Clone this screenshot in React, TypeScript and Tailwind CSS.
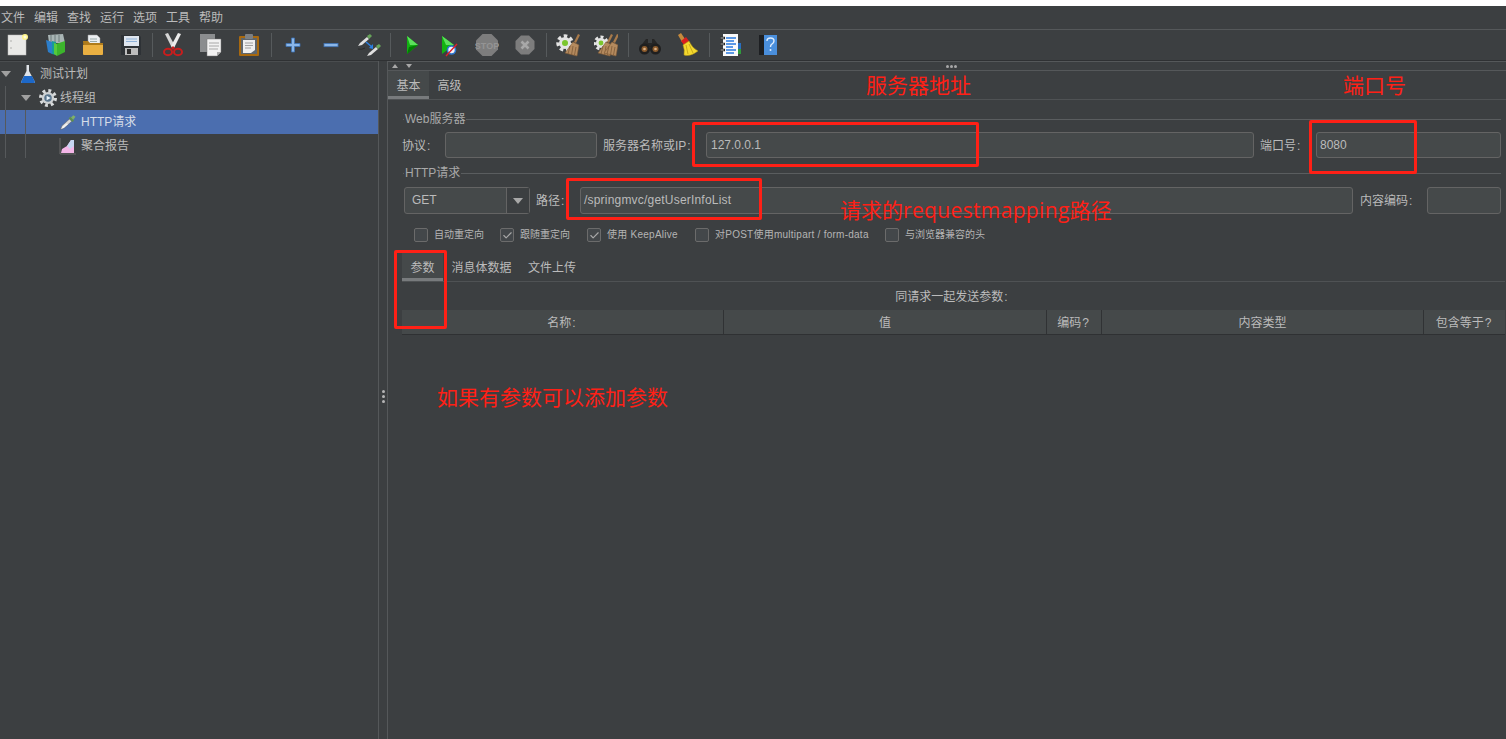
import React from "react";
import { Check } from "lucide-react";

const S = ({ children }: { children: React.ReactNode }) => (
  <svg width="24" height="24" viewBox="0 0 24 24" className="block shrink-0">{children}</svg>
);

const Pipette = () => (
  <g>
    <path d="M2 22 L4 17 L14 8 L17 11 L7 20 Z" fill="#d8d8d8" stroke="#555" strokeWidth="0.6" />
    <path d="M3 21 L5 18 L10 14 L12 15 L6 20 Z" fill="#f4f4f4" />
    <path d="M13 7 L18 12 L20 10 L15 5 Z" fill="#5d8f4e" />
    <path d="M16 6 L19 3 L22 5 L19 9 Z" fill="#7fb069" />
  </g>
);

const Broom = ({ x = 0, y = 0 }: { x?: number; y?: number }) => (
  <g transform={`translate(${x} ${y})`}>
    <path d="M21 1 L17 9 L15 8 L19 0 Z" fill="#a87a4a" />
    <path d="M14 8 L20 11 L18 22 L6 19 Z" fill="#b48a5e" stroke="#7d5a38" strokeWidth="0.6" />
    <path d="M11 12 L9 20 M14 12 L12.5 21 M17 13 L15.5 21" stroke="#7d5a38" strokeWidth="0.8" />
  </g>
);

const Gear = ({ cx, cy, r, fill = "#e4e4e4" }: { cx: number; cy: number; r: number; fill?: string }) => (
  <g>
    <circle cx={cx} cy={cy} r={r} fill="none" stroke={fill} strokeWidth={r * 0.5} strokeDasharray={`${r * 0.5} ${r * 0.4}`} />
    <circle cx={cx} cy={cy} r={r * 0.85} fill={fill} />
  </g>
);

const icons: Record<string, React.ReactNode> = {
  new: (
    <S>
      <rect x="3" y="2" width="18" height="20" fill="#e9e9e7" stroke="#bdbdbd" strokeWidth="0.5" />
      <circle cx="6" cy="8" r="0.7" fill="#999" />
      <circle cx="6" cy="15" r="0.7" fill="#999" />
      <circle cx="20" cy="4" r="3" fill="#fff48a" />
      <circle cx="20" cy="4" r="1.5" fill="#fffde0" />
    </S>
  ),
  templates: (
    <S>
      <path d="M5 2 L20 1 L22 10 L6 10 Z" fill="#a9b5b5" />
      <path d="M8 2 V9 M12 2 V9 M16 2 V9" stroke="#6f7c7c" />
      <path d="M3 7 L9 9 L9 21 L5 19 Z" fill="#2c7ecb" />
      <path d="M9 8 L13 9 L13 22 L9 21 Z" fill="#179a9a" />
      <path d="M13 11 L22 8 L22 19 L14 23 Z" fill="#3cb52c" />
      <path d="M14 11 L14 23 L11 21 L11 10 Z" fill="#56c93c" />
    </S>
  ),
  open: (
    <S>
      <path d="M7 2 H16 L19 5 V14 H7 Z" fill="#eceff2" stroke="#9a9a9a" strokeWidth="0.5" />
      <path d="M9 6 H16 M9 8.5 H16" stroke="#9aa" />
      <path d="M2 8 H7 L9 10 H22 V21 H3 Z" fill="#b07c1c" />
      <path d="M2 12 H22 L22 21 Q22 22 21 22 H3 Q2 22 2 21 Z" fill="#eab042" />
    </S>
  ),
  save: (
    <S>
      <path d="M2 2 H20 L22 4 V22 H2 Z" fill="#2e3236" />
      <rect x="5" y="3" width="15" height="10" fill="#dfe6ef" />
      <path d="M7 6 H18 M7 8.5 H18" stroke="#8eb1d8" />
      <rect x="6" y="15" width="13" height="7" fill="#bdbdbd" />
      <rect x="8" y="16" width="4" height="5" fill="#2d2d2d" />
    </S>
  ),
  cut: (
    <S>
      <path d="M4 1 L7 0 L14 13 L11 15 Z" fill="#d5d5d5" />
      <path d="M20 1 L17 0 L10 13 L13 15 Z" fill="#ececec" />
      <ellipse cx="7" cy="19" rx="4" ry="3.2" fill="none" stroke="#c91d1d" strokeWidth="2" />
      <ellipse cx="17" cy="19" rx="4" ry="3.2" fill="none" stroke="#c91d1d" strokeWidth="2" />
      <path d="M10 15 L12 13 L14 15 L12 17 Z" fill="#c91d1d" />
    </S>
  ),
  copy: (
    <S>
      <rect x="1" y="1" width="15" height="18" fill="#8b8d8f" />
      <path d="M8 6 H22 V19 L18 23 H8 Z" fill="#f2f2f2" stroke="#777" strokeWidth="0.5" />
      <path d="M10 10 H20 M10 13 H20 M10 16 H19" stroke="#a8a8a8" />
      <path d="M18 23 V19 H22 Z" fill="#aaa" />
    </S>
  ),
  paste: (
    <S>
      <rect x="2" y="3" width="20" height="20" fill="#a8690f" rx="1" />
      <rect x="4" y="5" width="16" height="16" fill="#5f666c" />
      <path d="M6 7 H18 V17 L14 20 H6 Z" fill="#efefef" />
      <path d="M8 10 H16 M8 12.5 H16 M8 15 H14" stroke="#a0a0a0" />
      <rect x="8" y="1" width="8" height="5" rx="1" fill="#7c8084" />
    </S>
  ),
  plus: (
    <S>
      <path d="M10.5 5 H13.5 V10.5 H19 V13.5 H13.5 V19 H10.5 V13.5 H5 V10.5 H10.5 Z" fill="#8ab6e8" stroke="#3e72b4" strokeWidth="0.8" />
    </S>
  ),
  minus: (
    <S>
      <rect x="5" y="10.5" width="14" height="3.2" fill="#8ab6e8" stroke="#3e72b4" strokeWidth="0.8" />
    </S>
  ),
  toggle: (
    <S>
      <path d="M1 13 L3 10 L10 4 L12 6 L5 12 Z" fill="#e0e0e0" />
      <path d="M10 3 L13 1 L15 3 L12 6 Z" fill="#67a45a" />
      <path d="M10 23 L12 20 L19 14 L21 16 L14 22 Z" fill="#e0e0e0" />
      <path d="M19 13 L22 11 L24 13 L21 16 Z" fill="#67a45a" />
      <path d="M9 9 L15 14" stroke="#2b7fe0" strokeWidth="1.6" />
      <path d="M16 11 L16 16 L12 15 Z" fill="#2b7fe0" />
      <path d="M1 16 Q5 17 8 15" stroke="#2b2b2b" strokeWidth="1" fill="none" />
    </S>
  ),
  play: (
    <S>
      <path d="M8 3 L19 12 L8 21 Z" fill="#12b312" />
      <path d="M8 3 L19 12 L11 12 Z" fill="#5de05d" />
      <path d="M8 21 L19 12 L10 14 Z" fill="#047a04" />
    </S>
  ),
  playNo: (
    <S>
      <path d="M5 3 L17 12 L5 21 Z" fill="#12b312" />
      <path d="M5 3 L17 12 L9 12 Z" fill="#5de05d" />
      <circle cx="14.5" cy="17" r="4" fill="#f2f6fb" stroke="#2c75d0" strokeWidth="1.6" />
      <path d="M9 23 L20 11" stroke="#e0202a" strokeWidth="1.4" />
    </S>
  ),
  stop: (
    <S>
      <path d="M7.5 1 H16.5 L23 7.5 V16.5 L16.5 23 H7.5 L1 16.5 V7.5 Z" fill="#7d7d7d" />
      <text x="12" y="15.5" textAnchor="middle" fontSize="9" fontWeight="700" fill="#949494" fontFamily="'Liberation Sans', sans-serif">STOP</text>
    </S>
  ),
  shutdown: (
    <S>
      <path d="M8 2.5 H16 L21.5 8 V16 L16 21.5 H8 L2.5 16 V8 Z" fill="#7d7d7d" />
      <path d="M8.5 8.5 L15.5 15.5 M15.5 8.5 L8.5 15.5" stroke="#a8a8a8" strokeWidth="2.6" />
    </S>
  ),
  clear: (
    <S>
      <Gear cx={9} cy={10} r={7} />
      <circle cx="9" cy="10" r="3" fill="#7bc62d" />
      <Broom x={3} y={1} />
    </S>
  ),
  clearAll: (
    <S>
      <Gear cx={7} cy={10} r={6} />
      <circle cx="7" cy="10" r="2.4" fill="#7bc62d" />
      <Broom x={-2} y={1} />
      <Broom x={4} y={1} />
    </S>
  ),
  search: (
    <S>
      <path d="M8 6 H10 V10 H14 V6 H16 L22 14 H2 Z" fill="#262626" />
      <circle cx="6.5" cy="16" r="5.5" fill="#1f1f1f" />
      <circle cx="17.5" cy="16" r="5.5" fill="#1f1f1f" />
      <circle cx="6.5" cy="16" r="3" fill="#8a5a2c" />
      <circle cx="17.5" cy="16" r="3" fill="#8a5a2c" />
      <circle cx="6.5" cy="16" r="1.3" fill="#d9b186" />
      <circle cx="17.5" cy="16" r="1.3" fill="#d9b186" />
    </S>
  ),
  reset: (
    <S>
      <path d="M2 2 L5 0 L9 6 L6 9 Z" fill="#c58a3c" />
      <path d="M5 8 L10 4 L13 8 L8 12 Z" fill="#d91e1e" />
      <path d="M7 12 L13 8 Q16 15 22 18 Q14 24 8 22 Q9 17 7 12 Z" fill="#f4d92e" stroke="#b29410" strokeWidth="0.5" />
      <path d="M10 12 L12 21 M13 11 L17 20" stroke="#c9aa18" />
    </S>
  ),
  log: (
    <S>
      <rect x="5" y="1" width="15" height="22" fill="#fafafa" />
      <rect x="20" y="10" width="3" height="6" fill="#2a6fc0" />
      <rect x="20" y="16" width="3" height="5" fill="#2f9a3c" />
      <path d="M8 5 H18 M8 8 H16 M8 11 H18 M8 14 H15 M8 17 H18 M8 20 H16" stroke="#2a7be0" strokeWidth="1.4" />
      <path d="M2 5 H7 M2 11 H7 M2 17 H7" stroke="#222" strokeWidth="2.4" />
      <path d="M2.5 5 H6 M2.5 11 H6 M2.5 17 H6" stroke="#ddd" strokeWidth="0.8" />
    </S>
  ),
  help: (
    <S>
      <rect x="3" y="2" width="6" height="20" fill="#1d1f22" />
      <rect x="8" y="2" width="13" height="20" fill="#4a8fdc" />
      <path d="M11 8 Q11 5 14.5 5 Q18 5 18 8 Q18 10 15.5 11.5 Q14.5 12 14.5 14" fill="none" stroke="#dfeeff" strokeWidth="1.4" />
      <circle cx="14.5" cy="17" r="1" fill="#dfeeff" />
    </S>
  ),
};

const Slot = ({ n, first }: { n: string; first?: boolean }) => (
  <div className={first ? "flex h-full w-[36px] items-center justify-start pl-[5px]" : "flex h-full w-[38px] items-center justify-center"}>
    {icons[n]}
  </div>
);

const Sep = ({ w }: { w: string }) => (
  <div className={`flex h-full items-center justify-center ${w}`}>
    <div className="h-[24px] w-px bg-[#565a5c]" />
  </div>
);

const Caret = () => (
  <svg width="10" height="6" viewBox="0 0 10 6" className="block shrink-0">
    <path d="M0 0 H10 L5 6 Z" fill="#a0a0a0" />
  </svg>
);

const TreeRow = ({ indent, caret, icon, label, selected }: { indent: string; caret?: boolean; icon: React.ReactNode; label: string; selected?: boolean }) => (
  <div className={`flex h-[24px] items-center ${indent} ${selected ? "bg-[#4b6eaf] text-[#d6dde8]" : ""}`}>
    <div className="flex w-[12px] shrink-0 justify-start">{caret ? <Caret /> : null}</div>
    <div className="ml-[6px] flex w-[18px] shrink-0 justify-center">{icon}</div>
    <span className={`text-[12px] leading-none ${caret ? "ml-[3px]" : "ml-[4px]"}`}>{label}</span>
  </div>
);

const Input = ({ value, cls }: { value?: string; cls: string }) => (
  <div className={`flex items-center rounded-[3px] border border-[#646464] bg-[#45494a] text-[12px] text-[#bbbbbb] ${cls}`}>
    {value}
  </div>
);

const Lbl = ({ text, mark = ":" }: { text: string; mark?: string }) => (
  <span>
    {text}
    <span className="ml-[1px] mr-[2px]">{mark}</span>
  </span>
);

const Legend = ({ text, cls }: { text: string; cls: string }) => (
  <div className={`flex h-[20px] items-center pl-[15px] pr-[5px] ${cls}`}>
    <div className="h-px w-[1px] bg-[#5a5d5f]" />
    <span className="px-[1px] text-[12px] text-[#a9a9a9]">{text}</span>
    <div className="h-px flex-1 bg-[#5a5d5f]" />
  </div>
);

const Cb = ({ label, w, checked, track = "" }: { label: string; w: string; checked?: boolean; track?: string }) => (
  <div className={`flex items-center ${w}`}>
    <div className="flex h-[14px] w-[14px] shrink-0 items-center justify-center rounded-[2px] border border-[#6b6b6b] bg-[#43474a]">
      {checked ? <Check size={11} strokeWidth={2.5} color="#a8a8a8" /> : null}
    </div>
    <span className={`ml-[6px] whitespace-nowrap text-[10px] leading-none text-[#b5b5b5] ${track}`}>{label}</span>
  </div>
);

const Tab = ({ label, active, w, shift }: { label: string; active?: boolean; w: string; shift: string }) => (
  <div className={`flex h-full flex-col ${w} ${active ? "bg-[#45494a]" : ""}`}>
    <div className={`flex flex-1 items-center justify-center text-[12px] text-[#bbbbbb] ${shift}`}>{label}</div>
    <div className={`h-[3px] ${active ? "bg-[#787b7d]" : ""}`} />
  </div>
);

const Th = ({ children, cls }: { children: React.ReactNode; cls: string }) => (
  <div className={`flex items-center justify-center pt-[2px] text-[12px] text-[#bbbbbb] ${cls}`}>{children}</div>
);

const RedBox = ({ cls }: { cls: string }) => (
  <div className={`pointer-events-none absolute rounded-[2px] border-[3px] border-[#ff2016] ${cls}`} />
);

const Note = ({ children, cls }: { children: React.ReactNode; cls: string }) => (
  <div className={`pointer-events-none absolute whitespace-nowrap text-[21px] leading-none text-[#ff2016] ${cls}`}>{children}</div>
);

export default function App() {
  return (
    <div className="relative flex h-[739px] w-[1506px] flex-col overflow-hidden bg-[#3c3f41] font-['Liberation_Sans','Noto_Sans_CJK_SC',sans-serif] text-[#bbbbbb]">
      <div className="h-[6px] shrink-0 bg-white" />

      <div className="flex h-[24px] shrink-0 items-center gap-[9px] border-b border-[#55585a] pl-[1px] text-[12px]">
        {["文件", "编辑", "查找", "运行", "选项", "工具", "帮助"].map((m) => (
          <span key={m}>{m}</span>
        ))}
      </div>

      <div className="flex h-[31px] shrink-0 items-center border-b border-[#2f3133]">
        <Slot n="new" first />
        <Slot n="templates" />
        <Slot n="open" />
        <Slot n="save" />
        <Sep w="w-[4px]" />
        <Slot n="cut" />
        <Slot n="copy" />
        <Slot n="paste" />
        <Sep w="w-[6px]" />
        <Slot n="plus" />
        <Slot n="minus" />
        <Slot n="toggle" />
        <Sep w="w-[4px]" />
        <Slot n="play" />
        <Slot n="playNo" />
        <Slot n="stop" />
        <Slot n="shutdown" />
        <Sep w="w-[5px]" />
        <Slot n="clear" />
        <Slot n="clearAll" />
        <Sep w="w-[6px]" />
        <Slot n="search" />
        <Slot n="reset" />
        <Sep w="w-[4px]" />
        <Slot n="log" />
        <Slot n="help" />
      </div>

      <div className="flex min-h-0 flex-1">
        <div className="relative w-[378px] shrink-0 border-t border-[#4a4d4f]">
          <TreeRow
            indent="pl-[1px]"
            caret
            label="测试计划"
            icon={
              <svg width="16" height="20" viewBox="0 0 16 20" className="block">
                <path d="M6.5 1 H9 V7 L15 18 Q15 19 14 19 H2 Q1 19 1 18 L6.5 7 Z" fill="#dfe3e8" />
                <path d="M4 12 H12 L15 18 Q15 19 14 19 H2 Q1 19 1 18 Z" fill="#1d68c8" />
              </svg>
            }
          />
          <TreeRow
            indent="pl-[21px]"
            caret
            label="线程组"
            icon={
              <svg width="20" height="20" viewBox="0 0 20 20" className="block">
                <circle cx="10" cy="10" r="8" fill="none" stroke="#d8dadb" strokeWidth="4" strokeDasharray="3.1 3.2" />
                <circle cx="10" cy="10" r="6.8" fill="#cfd2d4" />
                <circle cx="10" cy="10" r="4.2" fill="#59748c" />
                <path d="M8.5 7.5 L13 10 L8.5 12.5 Z" fill="#e8f2fa" />
              </svg>
            }
          />
          <TreeRow
            indent="pl-[41px]"
            selected
            label="HTTP请求"
            icon={
              <svg width="18" height="18" viewBox="0 0 24 24" className="block">
                <Pipette />
              </svg>
            }
          />
          <TreeRow
            indent="pl-[41px]"
            label="聚合报告"
            icon={
              <svg width="18" height="18" viewBox="0 0 18 18" className="block">
                <path d="M1 1 V17 H17" stroke="#6a6a6a" fill="none" />
                <path d="M2 16 L3 12 L8 9 L12 3 L15 3 V16 Z" fill="#f4b6e8" />
                <path d="M8 9 L12 3 L15 3 L15 9 L11 12 Z" fill="#c7d6f2" />
              </svg>
            }
          />
          <div className="absolute left-[5px] top-[24px] h-[72px] w-px bg-[#56595b]" />
          <div className="absolute left-[25px] top-[48px] h-[48px] w-px bg-[#56595b]" />
        </div>

        <div className="flex w-[10px] shrink-0 flex-col items-center justify-center gap-[2px] border-x border-[#55585a] pb-[8px]">
          <div className="h-[3px] w-[3px] rounded-full bg-[#b5b5b5]" />
          <div className="h-[3px] w-[3px] rounded-full bg-[#b5b5b5]" />
          <div className="h-[3px] w-[3px] rounded-full bg-[#b5b5b5]" />
        </div>

        <div className="flex min-w-0 flex-1 flex-col">
          <div className="flex h-[10px] shrink-0 items-center border-y border-[#55585a] pl-[4px]">
            <svg width="24" height="6" viewBox="0 0 24 6" className="block">
              <path d="M0 5 H6 L3 1 Z" fill="#a8a8a8" />
              <path d="M14 1 H20 L17 5 Z" fill="#a8a8a8" />
            </svg>
            <div className="ml-[530px] flex gap-[1px]">
              <div className="h-[3px] w-[3px] rounded-full bg-[#a8a8a8]" />
              <div className="h-[3px] w-[3px] rounded-full bg-[#a8a8a8]" />
              <div className="h-[3px] w-[3px] rounded-full bg-[#a8a8a8]" />
            </div>
          </div>

          <div className="flex h-[29px] shrink-0 border-b border-[#4f5254]">
            <Tab label="基本" active w="w-[41px]" shift="pt-[4px]" />
            <Tab label="高级" w="w-[41px]" shift="pt-[4px]" />
          </div>

          <Legend text="Web服务器" cls="mt-[9px]" />
          <div className="mt-[3px] flex h-[26px] shrink-0 items-stretch pl-[14px] pr-[5px] text-[12px]">
            <div className="flex w-[43px] items-center pt-[1px]"><Lbl text="协议" /></div>
            <Input cls="w-[152px]" />
            <div className="ml-[6px] flex w-[103px] items-center pt-[1px]"><Lbl text="服务器名称或IP" /></div>
            <Input cls="flex-1 pl-[4px]" value="127.0.0.1" />
            <div className="ml-[6px] flex w-[56px] items-center pt-[1px]"><Lbl text="端口号" /></div>
            <Input cls="w-[185px] pl-[3px]" value="8080" />
          </div>

          <Legend text="HTTP请求" cls="mt-[5px]" />
          <div className="mt-[4px] flex h-[27px] shrink-0 items-stretch pl-[16px] pr-[5px] text-[12px]">
            <div className="flex w-[126px] items-stretch rounded-[3px] border border-[#646464] bg-[#45494a]">
              <div className="flex flex-1 items-center pb-[2px] pl-[7px]">GET</div>
              <div className="flex w-[23px] items-center justify-center border-l border-[#646464] bg-[#3c3f41]">
                <svg width="10" height="6" viewBox="0 0 10 6" className="block">
                  <path d="M0 0 H10 L5 6 Z" fill="#a8a8a8" />
                </svg>
              </div>
            </div>
            <div className="ml-[6px] flex w-[44px] items-center"><Lbl text="路径" /></div>
            <Input cls="flex-1 pb-[2px] pl-[3px] tracking-[0.2px]" value="/springmvc/getUserInfoList" />
            <div className="ml-[7px] flex w-[67px] items-center"><Lbl text="内容编码" /></div>
            <Input cls="w-[74px]" />
          </div>

          <div className="mt-[14px] flex h-[14px] shrink-0 items-center pl-[26px]">
            <Cb label="自动重定向" w="w-[86px]" />
            <Cb label="跟随重定向" w="w-[87px]" checked />
            <Cb label="使用 KeepAlive" w="w-[108px]" checked track="tracking-[0.25px]" />
            <Cb label="对POST使用multipart / form-data" w="w-[190px]" track="tracking-[0.25px]" />
            <Cb label="与浏览器兼容的头" w="w-[120px]" />
          </div>

          <div className="ml-[14px] mr-[1px] mt-[10px] flex h-[30px] shrink-0 border-b border-[#4f5254]">
            <Tab label="参数" active w="w-[41px]" shift="pt-[6px]" />
            <Tab label="消息体数据" w="w-[77px]" shift="pt-[6px]" />
            <Tab label="文件上传" w="w-[64px]" shift="pt-[6px]" />
          </div>

          <div className="flex h-[28px] shrink-0 items-center justify-center pl-[11px] pt-[1px] text-[12px]">
            <Lbl text="同请求一起发送参数" />
          </div>

          <div className="ml-[14px] mr-[1px] grid h-[25px] shrink-0 grid-cols-[322px_323px_55px_322px_81px] border-b border-[#2f3133] bg-[#45494a]">
            <Th cls="border-r border-[#303234]"><Lbl text="名称" /></Th>
            <Th cls="border-r border-[#303234]">值</Th>
            <Th cls="border-r border-[#303234]"><Lbl text="编码" mark="?" /></Th>
            <Th cls="border-r border-[#303234]">内容类型</Th>
            <Th cls=""><Lbl text="包含等于" mark="?" /></Th>
          </div>
        </div>
      </div>

      <RedBox cls="left-[692px] top-[122px] h-[45px] w-[287px]" />
      <RedBox cls="left-[1309px] top-[120px] h-[54px] w-[108px]" />
      <RedBox cls="left-[566px] top-[178px] h-[42px] w-[196px]" />
      <RedBox cls="left-[394px] top-[250px] h-[79px] w-[53px]" />
      <Note cls="left-[866px] top-[75px]">服务器地址</Note>
      <Note cls="left-[1343px] top-[75px]">端口号</Note>
      <Note cls="left-[840px] top-[200px]">
        请求的<span className="font-['Open_Sans',sans-serif] tracking-[0.35px]">requestmapping</span>路径
      </Note>
      <Note cls="left-[437px] top-[387px]">如果有参数可以添加参数</Note>
    </div>
  );
}
